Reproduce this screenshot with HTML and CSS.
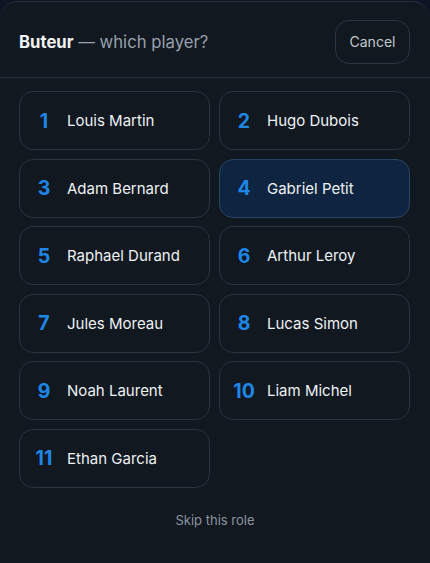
FILE: index.html
```html
<!DOCTYPE html>
<html>
<head>
<meta charset="utf-8">
<link rel="stylesheet" href="styles.css">
</head>
<body>
<div class="sheet">
  <div class="header">
    <div class="title"><strong>Buteur</strong> — which player?</div>
    <button class="cancel">Cancel</button>
  </div>
  <div class="grid">
    <div class="card"><span class="num">1</span><span class="name">Louis Martin</span></div>
    <div class="card"><span class="num">2</span><span class="name">Hugo Dubois</span></div>
    <div class="card"><span class="num">3</span><span class="name">Adam Bernard</span></div>
    <div class="card selected"><span class="num">4</span><span class="name">Gabriel Petit</span></div>
    <div class="card"><span class="num">5</span><span class="name">Raphael Durand</span></div>
    <div class="card"><span class="num">6</span><span class="name">Arthur Leroy</span></div>
    <div class="card"><span class="num">7</span><span class="name">Jules Moreau</span></div>
    <div class="card"><span class="num">8</span><span class="name">Lucas Simon</span></div>
    <div class="card"><span class="num">9</span><span class="name">Noah Laurent</span></div>
    <div class="card"><span class="num">10</span><span class="name">Liam Michel</span></div>
    <div class="card"><span class="num">11</span><span class="name">Ethan Garcia</span></div>
  </div>
  <div class="skip">Skip this role</div>
</div>
</body>
</html>
```
FILE: styles.css
```css
html, body {
  margin: 0;
  padding: 0;
  background: #0d1424;
  height: 563px;
  overflow: hidden;
}
body {
  font-family: Inter, "Noto Sans", sans-serif;
}
.sheet {
  margin-top: 1px;
  height: 562px;
  box-sizing: border-box;
  background: #111820;
  border-top: 1px solid #27303c;
  border-radius: 18px 18px 0 0;
}
.header {
  display: flex;
  align-items: center;
  justify-content: space-between;
  padding: 0 20px 0 19px;
  height: 75px;
  border-bottom: 1px solid #232c37;
}
.title {
  font-size: 16.7px;
  color: #98a1ad;
  margin-top: 5px;
}
.title strong {
  color: #f1f3f5;
  font-weight: 700;
}
.cancel {
  font-family: Inter, "Noto Sans", sans-serif;
  background: transparent;
  border: 1px solid #2b3440;
  color: #c2c8cf;
  font-size: 14px;
  border-radius: 14px;
  width: 75px;
  height: 44px;
  margin-top: 4px;
  padding: 0;
}
.grid {
  display: grid;
  grid-template-columns: 1fr 1fr;
  column-gap: 9px;
  row-gap: 8.5px;
  padding: 13px 20px 0 19px;
}
.card {
  box-sizing: border-box;
  height: 59px;
  border: 1px solid #2a333e;
  border-radius: 14px;
  background: #111820;
  display: flex;
  align-items: center;
  padding-left: 10px;
}
.card.selected {
  background: #0f2440;
  border-color: #284563;
}
.num {
  color: #1f86e6;
  font-weight: 700;
  font-size: 19.5px;
  width: 28px;
  margin-right: 9px;
  text-align: center;
  flex: none;
}
.name {
  color: #eef1f4;
  font-size: 15px;
  font-weight: 400;
}
.skip {
  text-align: center;
  color: #8b949f;
  font-size: 13px;
  margin-top: 24px;
}
```
